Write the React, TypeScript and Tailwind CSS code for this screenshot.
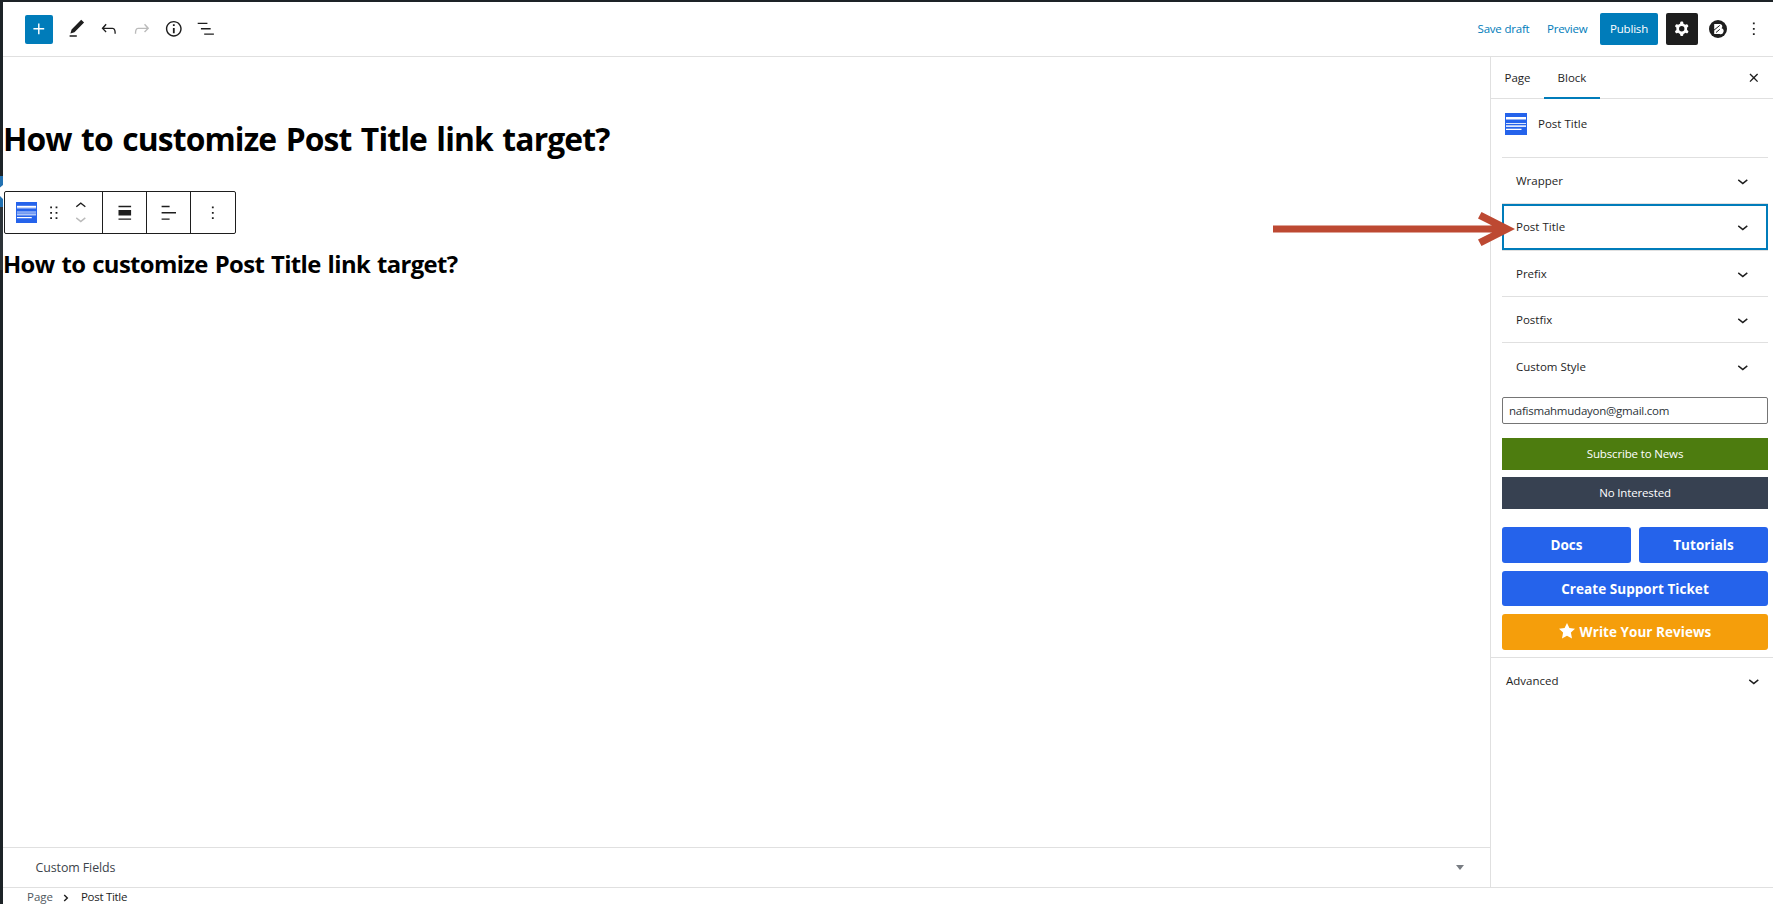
import type { ReactNode } from "react";

const paths = {
  plus: "M18 11.2h-5.2V6h-1.6v5.2H6v1.6h5.2V18h1.6v-5.2H18z",
  edit: "M20.1 5.1L16.9 2 6.2 12.7l-1.3 4.4 4.5-1.3L20.1 5.1zM4 20.8h8v-1.5H4v1.5z",
  undo: "M18.3 11.7c-.6-.6-1.4-.9-2.3-.9H6.7l2.9-3.3-1.1-1-4.5 5L8.5 16l1-1-2.7-2.7H16c.5 0 .9.2 1.3.5 1 1 1 3.4 1 4.5v.3h1.5v-.2c0-1.5 0-4.3-1.5-5.7z",
  redo: "M15.6 6.5l-1.1 1 2.9 3.3H8c-.9 0-1.7.3-2.3.9-1.4 1.5-1.4 4.2-1.4 5.6v.2h1.5v-.3c0-1.1 0-3.5 1-4.5.3-.3.7-.5 1.3-.5h9.2L14.5 15l1.1 1.1 4.6-4.6-4.6-5z",
  info: "M12 3.2c-4.8 0-8.8 3.9-8.8 8.8 0 4.8 3.9 8.8 8.8 8.8 4.8 0 8.8-3.9 8.8-8.8 0-4.8-4-8.8-8.8-8.8zm0 16c-4 0-7.2-3.3-7.2-7.2C4.8 8 8 4.8 12 4.8s7.2 3.3 7.2 7.2c0 4-3.2 7.2-7.2 7.2zM11 17h2v-6h-2v6zm0-8h2V7h-2v2z",
  list: "M13.8 5.2H3v1.5h10.8V5.2zm-3.6 12v1.5H21v-1.5H10.2zm7.2-6H6.6v1.5h10.8v-1.5z",
  cog: "M10.289 4.836A1 1 0 0111.275 4h1.306a1 1 0 01.987.836l.244 1.466c.787.26 1.503.679 2.108 1.218l1.393-.522a1 1 0 011.216.437l.653 1.13a1 1 0 01-.23 1.273l-1.148.944a6.025 6.025 0 010 2.435l1.149.946a1 1 0 01.23 1.272l-.653 1.13a1 1 0 01-1.216.437l-1.394-.522c-.605.54-1.32.958-2.108 1.218l-.244 1.466a1 1 0 01-.987.836h-1.306a1 1 0 01-.986-.836l-.244-1.466a5.995 5.995 0 01-2.108-1.218l-1.394.522a1 1 0 01-1.217-.436l-.653-1.131a1 1 0 01.23-1.272l1.149-.946a6.026 6.026 0 010-2.435l-1.148-.944a1 1 0 01-.23-1.272l.653-1.131a1 1 0 011.217-.437l1.393.522a5.994 5.994 0 012.108-1.218l.244-1.466zM14.929 12a3 3 0 11-6 0 3 3 0 016 0z",
  more: "M13 19h-2v-2h2v2zm0-6h-2v-2h2v2zm0-6h-2V5h2v2z",
  drag: "M8 7h2V5H8v2zm0 6h2v-2H8v2zm0 6h2v-2H8v2zm6-14v2h2V5h-2zm0 8h2v-2h-2v2zm0 6h2v-2h-2v2z",
  up: "M6.5 12.4L12 8l5.5 4.4-.9 1.2L12 10l-4.5 3.6-1-1.2z",
  down: "M17.5 11.6L12 16l-5.5-4.4.9-1.2L12 14l4.5-3.6 1 1.2z",
  close: "M12 13.06l3.712 3.713 1.061-1.06L13.061 12l3.712-3.712-1.06-1.06L12 10.938 8.288 7.227l-1.061 1.06L10.939 12l-3.712 3.712 1.06 1.061L12 13.061z",
  align: "M5 15h14V9H5v6zm0 4.8h14v-1.5H5v1.5zM5 4.2v1.5h14V4.2H5z",
  textLeft: "M4 19.8h8.9v-1.5H4v1.5zm8.9-15.6H4v1.5h8.9V4.2zm-8.9 7v1.5h16v-1.5H4z",
};

function Icon({ name, className = "" }: { name: keyof typeof paths; className?: string }) {
  return (
    <svg viewBox="0 0 24 24" fillRule="evenodd" className={`size-[21.6px] shrink-0 fill-current ${className}`}>
      <path d={paths[name]} />
    </svg>
  );
}

function BlockIcon({ className }: { className: string }) {
  return (
    <svg viewBox="0 0 22 22" className={`shrink-0 ${className}`}>
      <rect width="22" height="22" fill="#2563eb" />
      <g fill="#fff">
        <rect x="1" y="4" width="20" height="2" />
        <rect x="1" y="6" width="20" height="1" opacity=".5" />
        <rect x="1" y="10" width="20" height="1" opacity=".85" />
        <rect x="1" y="12" width="20" height="1" opacity=".65" />
        <rect x="1" y="13" width="20" height="1" opacity=".85" />
        <rect x="1" y="15.7" width="15.5" height="1.3" />
      </g>
    </svg>
  );
}

function Tool({ children }: { children: ReactNode }) {
  return <button className="flex w-[32.4px] shrink-0 justify-center">{children}</button>;
}

function Header() {
  return (
    <header className="flex h-[55px] shrink-0 items-center justify-between border-b border-[#e0e0e0] pl-[22px] pr-[8.2px]">
      <div className="flex items-center">
        <button className="mr-[7.5px] flex h-[29px] w-7 items-center justify-center rounded-[2px] bg-[#007cba] text-white">
          <Icon name="plus" />
        </button>
        <Tool><Icon name="edit" /></Tool>
        <Tool><Icon name="undo" /></Tool>
        <Tool><Icon name="redo" className="text-[#bbbbbb]" /></Tool>
        <Tool><Icon name="info" /></Tool>
        <Tool><Icon name="list" /></Tool>
      </div>
      <div className="flex items-center">
        <button className="mr-[16.5px] w-[53px] text-left tracking-[-0.2px] text-[#007cba]">Save draft</button>
        <button className="mr-[12px] w-[41px] text-left tracking-[-0.25px] text-[#007cba]">Preview</button>
        <button className="mr-2 h-8 w-[58px] rounded-[2px] bg-[#007cba] tracking-[-0.2px] text-white">Publish</button>
        <button className="mr-[11px] flex size-8 items-center justify-center rounded-[2px] bg-[#1e1e1e] text-white">
          <Icon name="cog" />
        </button>
        <svg viewBox="0 0 18 18" className="mr-[16.2px] size-[18px]">
          <circle cx="9" cy="9" r="9" fill="#1e1e1e" />
          <path d="M5.2 4h5.6a2.4 2.4 0 0 1 1.7 4.2a3 3 0 0 1-1.9 5.8H5.2z" fill="#fff" />
          <path d="M4.8 10.3l6-4.900M7 12.500l3.800-3.200" stroke="#1e1e1e" strokeWidth="1" />
        </svg>
        <Icon name="more" />
      </div>
    </header>
  );
}

function BlockToolbar() {
  return (
    <div className="ml-px mt-[31px] flex h-[43px] w-[232px] items-stretch divide-x divide-[#1e1e1e] rounded-[2px] border border-[#1e1e1e]">
      <div className="flex w-[98px] items-center pl-[11px]">
        <BlockIcon className="size-[21px]" />
        <Icon name="drag" className="ml-[5.5px]" />
        <div className="ml-[5.5px] flex flex-col">
          <Icon name="up" className="-mb-[4.5px]" />
          <Icon name="down" className="-mt-[4.6px] text-[#bbbbbb]" />
        </div>
      </div>
      <div className="flex w-11 items-center justify-center"><Icon name="align" /></div>
      <div className="flex w-11 items-center justify-center"><Icon name="textLeft" /></div>
      <div className="flex flex-1 items-center justify-center"><Icon name="more" /></div>
    </div>
  );
}

function Editor() {
  return (
    <main className="flex min-w-0 flex-1 flex-col">
      <h1 className="mt-[62px] h-[41px] text-[31.8px] font-bold leading-[40px] tracking-[-0.86px] [word-spacing:2px] text-black">
        How to customize Post Title link target?
      </h1>
      <BlockToolbar />
      <h2 className="mt-[15px] h-[30px] text-[23.85px] font-bold leading-[30px] tracking-[-0.64px] [word-spacing:1.4px] text-black">
        How to customize Post Title link target?
      </h2>
      <div className="mt-auto flex h-10 items-center justify-between border-t border-[#e0e0e0] pl-[32.5px] pr-[26px] text-[12.4px] tracking-[-0.08px] text-[#3c434a]">
        <span>Custom Fields</span>
        <svg viewBox="0 0 8 5" className="h-[5px] w-2 fill-[#787c82]"><path d="M0 0h8L4 5z" /></svg>
      </div>
    </main>
  );
}

function PanelRow({ label, last = false }: { label: string; last?: boolean }) {
  return (
    <button className={`flex w-full items-center justify-between px-[14px] ${last ? "h-[47px]" : "h-[46px] border-b border-[#e0e0e0]"}`}>
      <span>{label}</span>
      <Icon name="down" />
    </button>
  );
}

function SelectedPanelRow({ label }: { label: string }) {
  return (
    <div className="border-b border-[#e0e0e0]">
      <button className="flex h-[46px] w-full items-center justify-between border-2 border-[#007cba] px-3">
        <span>{label}</span>
        <Icon name="down" />
      </button>
    </div>
  );
}

function Sidebar() {
  return (
    <aside className="flex w-[283px] shrink-0 flex-col border-l border-[#e0e0e0]">
      <div className="flex h-[42px] items-stretch border-b border-[#e0e0e0] pr-[8.2px]">
        <button className="w-[53px] text-center">Page</button>
        <button className="-mb-px w-14 border-b-2 border-[#007cba] pt-px text-center">Block</button>
        <button className="ml-auto flex items-center"><Icon name="close" /></button>
      </div>
      <div className="flex items-center gap-[11px] pl-[14px] pt-[14px]">
        <BlockIcon className="size-[22px]" />
        <span>Post Title</span>
      </div>
      <div className="ml-[11px] mt-[22px] w-[266px] border-t border-[#e0e0e0]">
        <PanelRow label="Wrapper" />
        <SelectedPanelRow label="Post Title" />
        <PanelRow label="Prefix" />
        <PanelRow label="Postfix" />
        <PanelRow label="Custom Style" last />
        <div className="mt-[7px] flex h-[27px] items-center rounded-[2px] border border-[#757575] pl-[6px] tracking-[-0.24px] text-[#2c3338]">
          nafismahmudayon@gmail.com
        </div>
        <button className="mt-[14px] block h-8 w-full bg-[#4d7c0f] tracking-[-0.15px] text-white">Subscribe to News</button>
        <button className="mt-[7px] block h-8 w-full bg-[#374151] tracking-[-0.15px] text-white">No Interested</button>
        <div className="mt-[18px] grid grid-cols-2 gap-2 text-[13.5px] font-bold tracking-[0.05px] text-white">
          <button className="h-9 rounded-[3px] bg-[#2563eb]">Docs</button>
          <button className="h-9 rounded-[3px] bg-[#2563eb]">Tutorials</button>
          <button className="col-span-2 h-[35px] rounded-[3px] bg-[#2563eb]">Create Support Ticket</button>
          <button className="col-span-2 flex h-9 items-center justify-center gap-[5px] rounded-[3px] bg-[#f59e0b]">
            <svg viewBox="0 0 16 16" className="-mt-[3px] size-4 fill-white">
              <path d="M8 0l2.4 5 5.6.7-4.1 3.8 1.1 6L8 12.8 3 15.5l1.1-6L0 5.7 5.6 5z" />
            </svg>
            <span>Write Your Reviews</span>
          </button>
        </div>
      </div>
      <button className="mt-[7px] flex h-[47px] items-center justify-between border-t border-[#e0e0e0] pl-[15px] pr-[8.2px]">
        <span className="-mt-px">Advanced</span>
        <Icon name="down" />
      </button>
    </aside>
  );
}

export default function App() {
  return (
    <div className="relative flex h-[904px] w-[1773px] flex-col overflow-hidden bg-[#1d2327] pl-[3px] pt-[2px] font-['Open_Sans','Noto_Sans',sans-serif] text-[11.5px] leading-4 text-[#1e1e1e]">
      <div className="flex min-h-0 flex-1 flex-col bg-white">
        <Header />
        <div className="flex min-h-0 flex-1">
          <Editor />
          <Sidebar />
        </div>
        <footer className="flex h-[17px] shrink-0 items-start border-t border-[#e0e0e0] pl-[24px] pt-px">
          <span className="w-[25px] text-[#50575e]">Page</span>
          <svg viewBox="0 0 6 9" className="ml-[11px] mr-[12px] mt-[5px] h-[8px] w-[6px] fill-none stroke-[#1e1e1e]" strokeWidth="1.6">
            <path d="M1 1l3.5 3.5L1 8" />
          </svg>
          <span className="tracking-[-0.3px]">Post Title</span>
        </footer>
      </div>
      <div className="absolute left-0 top-[176px] h-[94px] w-[3px] bg-[#2c3338]">
        <svg viewBox="0 0 3 31" className="block h-[31px] w-[3px]">
          <rect width="3" height="31" fill="#fff" />
          <path d="M0 0h3v9L0 11.5zM0 20l3 3v8H0z" fill="#2271b1" />
        </svg>
      </div>
      <svg viewBox="0 0 242 34" className="absolute left-[1273px] top-[211.5px] h-[34px] w-[242px]">
        <path d="M0 13.5h219L205 6.5 208.5 0 242 17 208.5 34 205 27.5l14-7H0z" fill="#bd4932" />
      </svg>
    </div>
  );
}
